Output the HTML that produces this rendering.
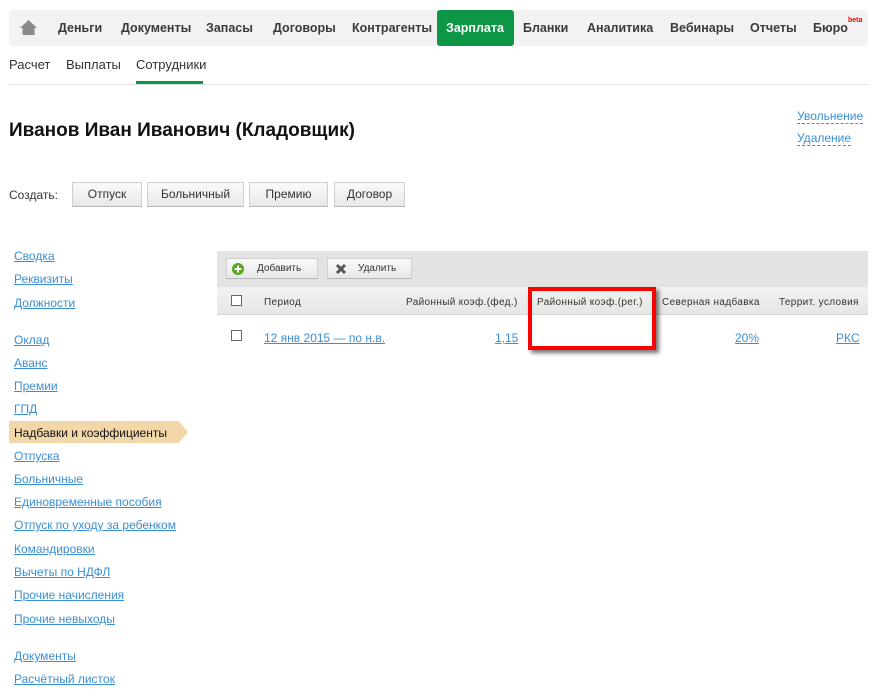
<!DOCTYPE html>
<html><head><meta charset="utf-8"><style>
*{margin:0;padding:0;box-sizing:border-box}
body{width:879px;height:698px;background:#fff;font-family:"Liberation Sans",Arial,sans-serif;position:relative;overflow:hidden;color:#333}
.abs{position:absolute;white-space:nowrap}
.nav{position:absolute;left:9px;top:10px;width:859px;height:36px;background:#f2f2f2;border-radius:3px}
.nav span{position:absolute;top:11px;font-size:12.5px;font-weight:bold;color:#3a3a3a}
.green{position:absolute;left:437px;top:10px;width:77px;height:36px;background:#0c9646;border-radius:3px}
.sub{font-size:13px;color:#333;top:57px}
.btn{position:absolute;top:182px;height:25px;border:1px solid #d0d0d0;border-bottom-color:#b8b8b8;background:linear-gradient(#fafafa,#e8e8e8);font-size:12px;color:#333;text-align:center;line-height:23px}
.side a{position:absolute;left:14px;font-size:12px;color:#3a8fd6;text-decoration:underline;white-space:nowrap}
.th{position:absolute;top:297px;font-size:10px;color:#333;letter-spacing:.35px;white-space:nowrap}
.lnk{color:#3a8fd6;text-decoration:underline;font-size:12px;position:absolute;top:331px}
.cb{position:absolute;width:11px;height:11px;border:1px solid #666;background:#fff}
</style></head><body>
<div class="nav"></div>
<svg class="abs" style="left:19px;top:19px" width="19" height="17" viewBox="0 0 19 17"><path d="M9.5 1 L1 9 L3.5 9 L3.5 16 L15.5 16 L15.5 9 L18 9 Z" fill="#8a8a8a"/></svg>
<div class="nav" style="background:none">
<span style="left:49px">Деньги</span><span style="left:112px">Документы</span><span style="left:197px">Запасы</span><span style="left:264px">Договоры</span><span style="left:343px">Контрагенты</span>
<span style="left:514px">Бланки</span><span style="left:578px">Аналитика</span><span style="left:661px">Вебинары</span><span style="left:741px">Отчеты</span><span style="left:804px">Бюро</span>
</div>
<div class="green"></div>
<div class="abs" style="left:446px;top:21px;font-size:12.5px;font-weight:bold;color:#fff">Зарплата</div>
<div class="abs" style="left:848px;top:17px;font-size:7px;color:#e00;font-weight:bold">beta</div>
<div class="abs sub" style="left:9px">Расчет</div>
<div class="abs sub" style="left:66px">Выплаты</div>
<div class="abs sub" style="left:136px">Сотрудники</div>
<div class="abs" style="left:9px;top:84px;width:859px;height:1px;background:#e2e2e2"></div>
<div class="abs" style="left:136px;top:81px;width:67px;height:3px;background:#0c9646"></div>
<div class="abs" style="left:9px;top:120px;font-size:19px;font-weight:bold;color:#111">Иванов Иван Иванович (Кладовщик)</div>
<div class="abs" style="left:797px;top:109px;font-size:12px;color:#3a8fd6;border-bottom:1px dashed #3a8fd6;line-height:14px">Увольнение</div>
<div class="abs" style="left:797px;top:131px;font-size:12px;color:#3a8fd6;border-bottom:1px dashed #3a8fd6;line-height:14px">Удаление</div>
<div class="abs" style="left:9px;top:188px;font-size:12px;color:#333">Создать:</div>
<div class="btn" style="left:72px;width:70px">Отпуск</div>
<div class="btn" style="left:147px;width:97px">Больничный</div>
<div class="btn" style="left:249px;width:79px">Премию</div>
<div class="btn" style="left:334px;width:71px">Договор</div>
<div class="abs" style="left:9px;top:421px;width:170px;height:22px;background:#f2d8a8"></div>
<div class="abs" style="left:179px;top:421px;width:0;height:0;border-top:11px solid transparent;border-bottom:11px solid transparent;border-left:9px solid #f2d8a8"></div>
<div class="side">
<a style="top:249px">Сводка</a><a style="top:272px">Реквизиты</a><a style="top:296px">Должности</a>
<a style="top:333px">Оклад</a><a style="top:356px">Аванс</a><a style="top:379px">Премии</a><a style="top:402px">ГПД</a>
<a style="top:426px;color:#111;text-decoration:none">Надбавки и коэффициенты</a>
<a style="top:449px">Отпуска</a><a style="top:472px">Больничные</a><a style="top:495px">Единовременные пособия</a><a style="top:518px">Отпуск по уходу за ребенком</a><a style="top:542px">Командировки</a><a style="top:565px">Вычеты по НДФЛ</a><a style="top:588px">Прочие начисления</a><a style="top:612px">Прочие невыходы</a>
<a style="top:649px">Документы</a><a style="top:672px">Расчётный листок</a>
</div>
<div class="abs" style="left:217px;top:251px;width:651px;height:36px;background:#e3e3e3"></div>
<div class="abs" style="left:217px;top:287px;width:651px;height:28px;background:linear-gradient(#f2f2f2,#e6e6e6);border-bottom:1px solid #d6d6d6"></div>
<div class="btn" style="left:226px;top:258px;width:92px;height:21px;line-height:19px;font-size:10px;text-align:left;padding-left:30px">Добавить</div>
<svg class="abs" style="left:232px;top:263px" width="12" height="12"><circle cx="6" cy="6" r="6" fill="#5aa61f"/><path d="M6 2.5v7M2.5 6h7" stroke="#fff" stroke-width="2"/></svg>
<div class="btn" style="left:327px;top:258px;width:85px;height:21px;line-height:19px;font-size:10px;text-align:left;padding-left:30px">Удалить</div>
<svg class="abs" style="left:335px;top:263px" width="12" height="12"><path d="M2 2L10 10M10 2L2 10" stroke="#555" stroke-width="3"/></svg>
<div class="cb" style="left:231px;top:295px"></div>
<div class="th" style="left:264px">Период</div>
<div class="th" style="left:406px">Районный коэф.(фед.)</div>
<div class="th" style="left:537px">Районный коэф.(рег.)</div>
<div class="th" style="left:662px">Северная надбавка</div>
<div class="th" style="left:779px">Террит. условия</div>
<div class="cb" style="left:231px;top:330px"></div>
<a class="lnk" style="left:264px">12 янв 2015 — по н.в.</a>
<a class="lnk" style="left:495px">1,15</a>
<a class="lnk" style="left:735px">20%</a>
<a class="lnk" style="left:836px">РКС</a>
<div class="abs" style="left:528px;top:287px;width:128px;height:63px;border:4px solid #f00;box-shadow:3px 3px 4px rgba(0,0,0,.55)"></div>
</body></html>
